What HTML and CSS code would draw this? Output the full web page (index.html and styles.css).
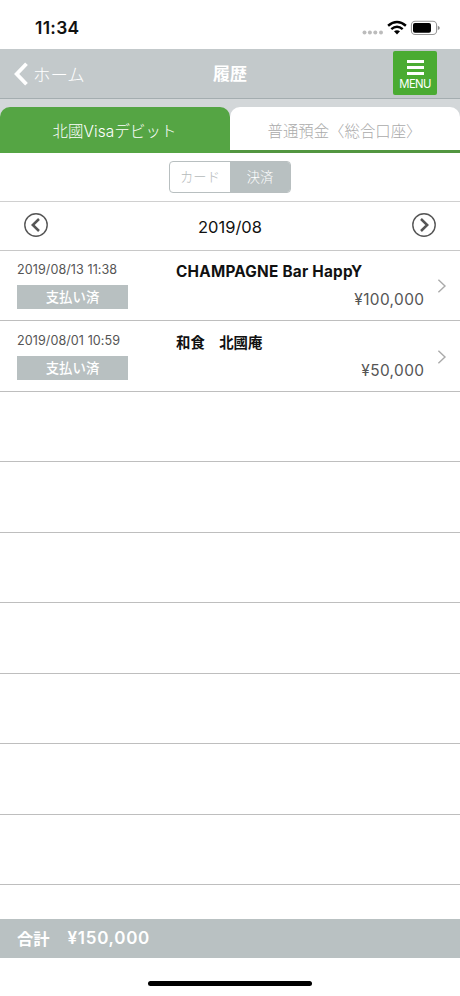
FILE: index.html
```html
<!DOCTYPE html>
<html lang="ja">
<head>
<meta charset="utf-8">
<title>履歴</title>
<link rel="stylesheet" href="styles.css">
</head>
<body>
<div class="app">
  <div class="status">
    <span class="clock">11:34</span>
    <svg class="status-icons" width="80" height="20" viewBox="0 0 80 20">
      <g fill="#bcbcbc"><circle cx="5.5" cy="14.4" r="2"/><circle cx="10.9" cy="14.4" r="2"/><circle cx="16.3" cy="14.4" r="2"/><circle cx="22" cy="14.4" r="2"/></g>
      <g fill="none" stroke="#000" stroke-width="2.5"><path d="M29.1 7.7Q38 .3 46.9 7.7"/><path d="M32.3 11.1Q38 6.5 43.7 11.1"/></g>
      <path d="M35 13.3Q38 11.2 41 13.3L38 16.5Z"/>
      <rect x="52.4" y="3.3" width="25.2" height="13.2" rx="3.8" fill="none" stroke="#979797" stroke-width="1.1"/>
      <rect x="54" y="5" width="18" height="9.8" rx="2"/>
      <path d="M78.8 7.7q2 .7 2 2.2t-2 2.2Z" fill="#888"/>
    </svg>
  </div>
  <header class="navbar">
    <div class="back"><svg width="15" height="24" viewBox="0 0 15 24"><path d="M12.5 1.8 2.7 12l9.8 10.2" fill="none" stroke="#fff" stroke-width="3.8"/></svg><span>ホーム</span></div>
    <h1>履歴</h1>
    <div class="menu"><i></i><i></i><i></i><span>MENU</span></div>
  </header>
  <nav class="tabs">
    <div class="tab active"><span class="visa">北國Visaデビット</span></div>
    <div class="tab"><span>普通預金〈総合口座〉</span></div>
  </nav>
  <div class="filter"><div class="segment"><span>カード</span><span class="selected">決済</span></div></div>
  <div class="month">
    <svg width="24" height="24" viewBox="0 0 24 24"><circle cx="12" cy="12" r="11.2"/><path d="m15 6-6.2 6 6.2 6"/></svg>
    <span>2019/08</span>
    <svg width="24" height="24" viewBox="0 0 24 24"><circle cx="12" cy="12" r="11.2"/><path d="m9 6 6.2 6L9 18"/></svg>
  </div>
  <main class="list">
    <div class="row">
      <div class="meta"><time>2019/08/13 11:38</time><span class="badge">支払い済</span></div>
      <div class="detail"><b class="latin">CHAMPAGNE Bar HappY</b><span class="amount">¥100,000</span></div>
      <svg class="go" width="10" height="14" viewBox="0 0 10 14"><path d="m1.4.8 6.6 6.2-6.6 6.2"/></svg>
    </div>
    <div class="row">
      <div class="meta"><time>2019/08/01 10:59</time><span class="badge">支払い済</span></div>
      <div class="detail"><b>和食　北國庵</b><span class="amount">¥50,000</span></div>
      <svg class="go" width="10" height="14" viewBox="0 0 10 14"><path d="m1.4.8 6.6 6.2-6.6 6.2"/></svg>
    </div>
    <div class="row"></div><div class="row"></div><div class="row"></div><div class="row"></div>
    <div class="row"></div><div class="row"></div><div class="row"></div>
  </main>
  <footer class="total"><span>合計</span><span class="sum">¥150,000</span></footer>
  <div class="home"><div class="indicator"></div></div>
</div>
</body>
</html>
```

FILE: styles.css
```css
* { box-sizing: border-box; }
body {
  margin: 0;
  background: #fff;
  color: #111;
  font-family: Inter, "Noto Sans CJK JP", sans-serif;
}
svg { display: block; flex: none; }
.app {
  width: 460px;
  height: 996px;
  display: flex;
  flex-direction: column;
  overflow: hidden;
}
.app > * { flex: none; }
.status {
  height: 49px;
  padding: 18px 18px 0 35px;
  display: flex;
  justify-content: space-between;
}
.clock {
  font-size: 17.4px;
  font-weight: 600;
  line-height: 20px;
  letter-spacing: .3px;
}
.status-icons { overflow: visible; margin-right: 3px; }
.navbar {
  height: 50px;
  display: grid;
  grid-template-columns: 1fr auto 1fr;
  align-items: center;
  background: #c3c9cb;
  border-bottom: 1px solid #a4adb0;
  color: #fff;
}
.back {
  display: flex;
  align-items: center;
  gap: 4px;
  padding-left: 14px;
  font-size: 17.4px;
  font-weight: 300;
}
.back span { margin-top: -1px; }
.navbar h1 {
  margin: 0;
  font-size: 17px;
  line-height: 24px;
  font-weight: 700;
}
.menu {
  justify-self: end;
  align-self: start;
  width: 44px;
  height: 44px;
  margin: 2px 23px 0 0;
  padding-top: 9px;
  display: flex;
  flex-direction: column;
  align-items: center;
  gap: 3px;
  background: #4aab32;
  border-radius: 2px;
}
.menu i { width: 17px; height: 3px; background: #fff; }
.menu span {
  font-size: 11.3px;
  line-height: 13px;
  letter-spacing: -.65px;
}
.tabs {
  height: 54px;
  padding-top: 8px;
  display: flex;
  background: #d3d7d9;
}
.tab {
  width: 230px;
  display: flex;
  align-items: center;
  justify-content: center;
  border-radius: 10px 10px 0 0;
  border-bottom: 3px solid #529640;
  background: #fff;
  color: #aaa;
  font-size: 15.4px;
  font-weight: 300;
  padding-top: 2px;
}
.tab:not(.active) span { margin-right: 1px; }
.tab.active {
  background: #55a544;
  border-color: #55a544;
  color: #fff;
}
.visa { margin-right: 1px; letter-spacing: .15px; }
.filter {
  height: 49px;
  padding-top: 8px;
  border-bottom: 1px solid #d0d0d0;
  display: flex;
  justify-content: center;
}
.segment {
  width: 122px;
  height: 32px;
  display: flex;
  border: 1px solid #b8bfc0;
  border-radius: 4px;
  overflow: hidden;
  font-size: 13.3px;
  font-weight: 300;
  line-height: 31px;
  color: #b5babb;
  text-align: center;
}
.segment span { flex: 1; }
.segment .selected { background: #b8c0c1; color: #fff; }
.month {
  height: 49px;
  padding: 0 24px;
  display: flex;
  align-items: center;
  justify-content: space-between;
  border-bottom: 1px solid #c8c8c8;
  font-size: 16.5px;
}
.month svg {
  fill: none;
  stroke: #555;
  stroke-width: 1.4;
  margin-bottom: 2px;
}
.month path { stroke-width: 2.5; }
.month span { padding-top: 1px; }
.list { height: 668px; }
.row {
  height: 70.44px;
  padding: 9px 13px 0 17px;
  display: flex;
  border-bottom: 1px solid #bebebe;
}
.row:nth-child(2) { padding-top: 9.6px; }
.meta { width: 159px; }
.meta time {
  display: block;
  height: 25px;
  font-size: 12.6px;
  line-height: 20px;
  letter-spacing: .06px;
  color: #555;
}
.badge {
  display: block;
  width: 111px;
  height: 24px;
  background: #b8c0c1;
  color: #fff;
  font-size: 13.4px;
  font-weight: 500;
  line-height: 24px;
  text-align: center;
}
.detail {
  width: 248px;
  display: flex;
  flex-direction: column;
  white-space: nowrap;
}
.detail b { height: 29px; font-size: 14.4px; line-height: 23px; }
.detail .latin { font-size: 15.3px; font-weight: 650; letter-spacing: .25px; }
.amount {
  align-self: flex-end;
  color: #555;
  font-size: 15.4px;
  line-height: 22px;
  letter-spacing: .4px;
  margin-right: -.4px;
}
.go {
  margin: 19px 0 0 13px;
  fill: none;
  stroke: #aaa;
  stroke-width: 1.4;
}
.total {
  height: 39px;
  padding: 0 0 2px 17px;
  display: flex;
  align-items: center;
  gap: 18px;
  background: #b9c1c2;
  color: #fff;
  font-size: 16.3px;
  font-weight: 600;
}
.sum { font-size: 17px; letter-spacing: .7px; }
.home {
  height: 38px;
  padding-top: 23px;
  display: flex;
  justify-content: center;
}
.indicator { width: 164px; height: 5px; border-radius: 3px; background: #000; }
```
